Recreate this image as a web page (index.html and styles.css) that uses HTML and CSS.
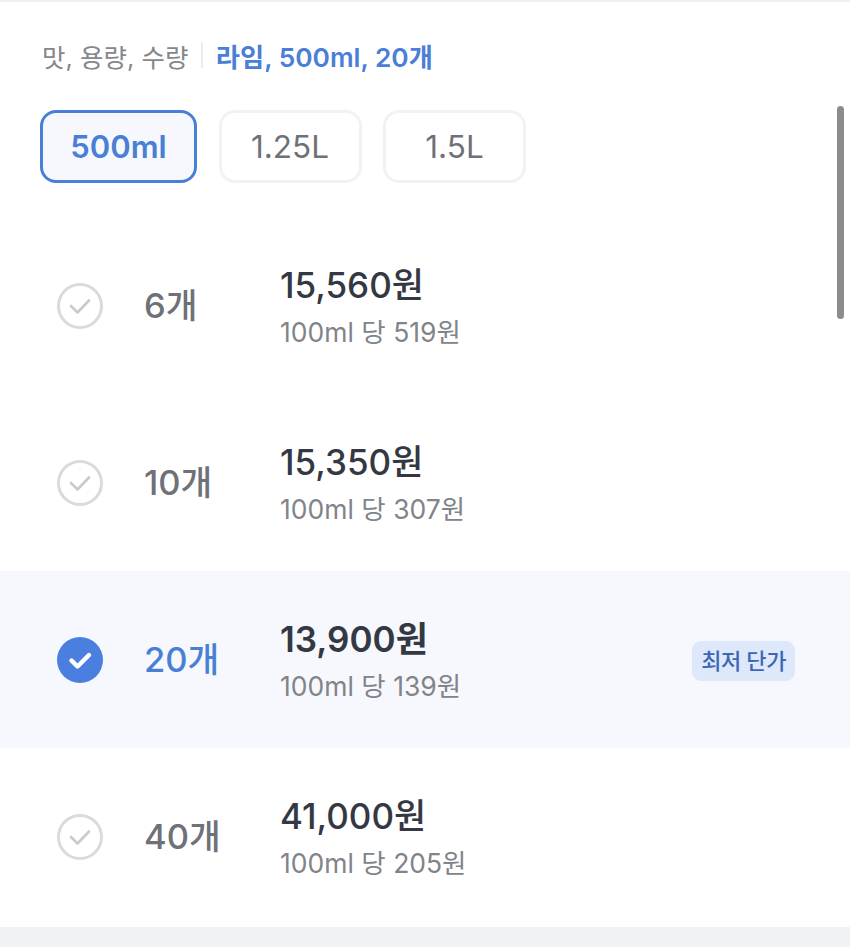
FILE: index.html
```html
<!DOCTYPE html>
<html lang="ko">
<head>
<meta charset="UTF-8" />
<meta name="viewport" content="width=device-width, initial-scale=1" />
<title>옵션 선택</title>
<link rel="stylesheet" href="styles.css">
</head>
<body>
<div class="sheet">
    <div class="scrollbar"></div>

    <div class="summary">
        <span class="summary-label">맛, 용량, 수량</span>
        <span class="summary-line"></span>
        <span class="summary-value">라임, 500ml, 20개</span>
    </div>

    <div class="chips">
        <button class="chip chip-on">500ml</button>
        <button class="chip chip-md">1.25L</button>
        <button class="chip chip-md">1.5L</button>
    </div>

    <ul class="options">
        <li class="option">
            <svg class="check" viewBox="0 0 46 46"><circle cx="23" cy="23" r="21.5" fill="none" stroke="#d9dadc" stroke-width="3"/><path d="M14 23l6.5 6.5L32 17.5" fill="none" stroke="#c8cacd" stroke-width="2.6" stroke-linecap="round" stroke-linejoin="round"/></svg>
            <span class="qty">6개</span>
            <div class="price-box">
                <div class="price">15,560원</div>
                <div class="unit">100ml 당 519원</div>
            </div>
        </li>
        <li class="option">
            <svg class="check" viewBox="0 0 46 46"><circle cx="23" cy="23" r="21.5" fill="none" stroke="#d9dadc" stroke-width="3"/><path d="M14 23l6.5 6.5L32 17.5" fill="none" stroke="#c8cacd" stroke-width="2.6" stroke-linecap="round" stroke-linejoin="round"/></svg>
            <span class="qty">10개</span>
            <div class="price-box">
                <div class="price">15,350원</div>
                <div class="unit">100ml 당 307원</div>
            </div>
        </li>
        <li class="option option-on">
            <svg class="check" viewBox="0 0 46 46"><circle cx="23" cy="23" r="23" fill="#4a7fe0"/><path d="M14.5 23.5l6 6L32 18" fill="none" stroke="#fff" stroke-width="4.4" stroke-linecap="round" stroke-linejoin="round"/></svg>
            <span class="qty">20개</span>
            <div class="price-box">
                <div class="price">13,900원</div>
                <div class="unit">100ml 당 139원</div>
            </div>
            <span class="badge">최저 단가</span>
        </li>
        <li class="option">
            <svg class="check" viewBox="0 0 46 46"><circle cx="23" cy="23" r="21.5" fill="none" stroke="#d9dadc" stroke-width="3"/><path d="M14 23l6.5 6.5L32 17.5" fill="none" stroke="#c8cacd" stroke-width="2.6" stroke-linecap="round" stroke-linejoin="round"/></svg>
            <span class="qty">40개</span>
            <div class="price-box">
                <div class="price">41,000원</div>
                <div class="unit">100ml 당 205원</div>
            </div>
        </li>
    </ul>
</div>
<div class="bottom-band"></div>
</body>
</html>
```

FILE: styles.css
```css
html, body {
    margin: 0;
    padding: 0;
}

body {
    background: #fff;
    color: #333843;
    font-family: Inter, "Noto Sans CJK KR", sans-serif;
    height: 947px;
    overflow: hidden;
}

.sheet {
    position: relative;
    height: 927px;
    border-top: 2px solid #f0f0f1;
    box-sizing: border-box;
}

.scrollbar {
    position: absolute;
    top: 104px;
    right: 6px;
    width: 7px;
    height: 213px;
    border-radius: 4px;
    background: #8c8c8e;
}

.summary {
    display: flex;
    align-items: center;
    height: 30px;
    padding: 38px 0 0 42px;
    font-size: 25.5px;
}

.summary-label {
    color: #85878b;
}

.summary-line {
    width: 2px;
    height: 26px;
    margin: 0 12.5px 0 13px;
    background: #ececee;
}

.summary-value {
    color: #4a7fd6;
    font-size: 26.3px;
    font-weight: 600;
}

.chips {
    display: flex;
    gap: 21.5px;
    padding: 40px 0 0 40px;
}

.chip {
    height: 73px;
    padding: 0;
    box-sizing: border-box;
    background: #fff;
    border: 3px solid #f1f2f3;
    border-radius: 16px;
    color: #6e7177;
    font-family: inherit;
    font-size: 31.5px;
    font-weight: 400;
}

.chip-on {
    width: 157px;
    border-color: #4a7fd6;
    background: #f6f8fd;
    color: #4a7fd6;
    font-size: 31px;
    font-weight: 600;
}

.chip-md {
    width: 143px;
}

.options {
    list-style: none;
    margin: 34px 0 0;
    padding: 0;
}

.option {
    display: flex;
    align-items: center;
    height: 177px;
    padding: 0 55px 0 57px;
    box-sizing: border-box;
}

.option-on {
    background: #f6f8fd;
}

.check {
    flex: none;
    width: 46px;
    height: 46px;
}

.qty {
    width: 136px;
    margin-left: 41px;
    padding-bottom: 5px;
    font-size: 34.5px;
    font-weight: 500;
    color: #6e7177;
}

.option-on .qty {
    color: #4a7fd6;
}

.price-box {
    flex: 1;
    padding: 5px 0 1px;
}

.price {
    font-size: 35px;
    font-weight: 500;
    line-height: 44px;
    margin-top: -2px;
}

.option-on .price {
    font-weight: 600;
}

.unit {
    margin-top: 7px;
    font-size: 26.5px;
    line-height: 36px;
    color: #818489;
}

.badge {
    padding: 4px 9px;
    margin-top: 2px;
    border-radius: 9px;
    background: #dde8fb;
    color: #3f66b4;
    font-size: 22px;
    font-weight: 500;
    line-height: 32px;
    letter-spacing: -0.4px;
}

.bottom-band {
    height: 20px;
    background: #f1f2f4;
}
```
